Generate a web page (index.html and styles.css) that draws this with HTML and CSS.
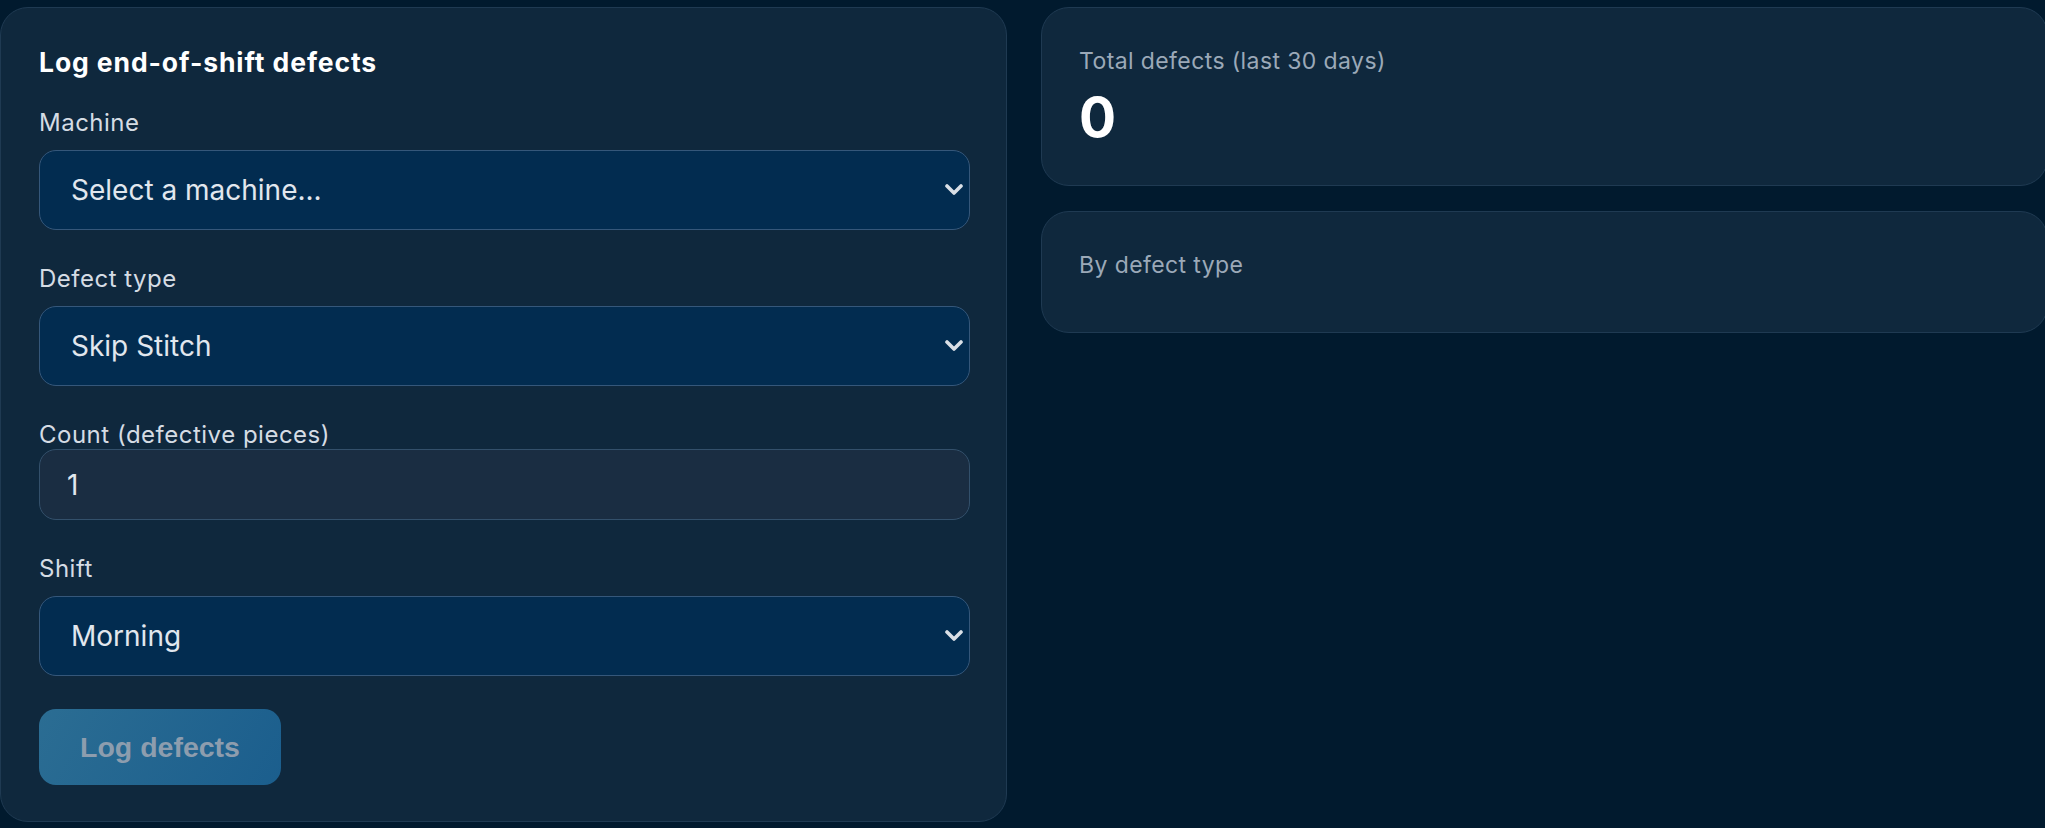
FILE: index.html
```html
<!DOCTYPE html>
<html lang="en">
<head>
<meta charset="utf-8">
<title>Defects</title>
<link rel="stylesheet" href="styles.css">
</head>
<body>
<main class="layout">
  <section class="panel form-panel">
    <h2 class="panel-title">Log end-of-shift defects</h2>
    <div class="fields">
      <div class="field">
        <label class="field-label" for="machine">Machine</label>
        <div class="select-wrap">
          <select id="machine" class="select">
            <option>Select a machine...</option>
          </select>
          <svg class="chevron" viewBox="0 0 18 11" width="18" height="11" aria-hidden="true"><path d="M2 2l7 7 7-7" fill="none" stroke="currentColor" stroke-width="3.6" stroke-linecap="round" stroke-linejoin="round"/></svg>
        </div>
      </div>
      <div class="field">
        <label class="field-label" for="dtype">Defect type</label>
        <div class="select-wrap">
          <select id="dtype" class="select">
            <option>Skip Stitch</option>
          </select>
          <svg class="chevron" viewBox="0 0 18 11" width="18" height="11" aria-hidden="true"><path d="M2 2l7 7 7-7" fill="none" stroke="currentColor" stroke-width="3.6" stroke-linecap="round" stroke-linejoin="round"/></svg>
        </div>
      </div>
      <div class="field">
        <label class="field-label tight" for="count">Count (defective pieces)</label>
        <input id="count" class="input" type="text" value="1">
      </div>
      <div class="field">
        <label class="field-label" for="shift">Shift</label>
        <div class="select-wrap">
          <select id="shift" class="select">
            <option>Morning</option>
          </select>
          <svg class="chevron" viewBox="0 0 18 11" width="18" height="11" aria-hidden="true"><path d="M2 2l7 7 7-7" fill="none" stroke="currentColor" stroke-width="3.6" stroke-linecap="round" stroke-linejoin="round"/></svg>
        </div>
      </div>
      <div class="actions">
        <button class="btn" type="button" disabled>Log defects</button>
      </div>
    </div>
  </section>
  <aside class="side">
    <section class="panel stat-panel">
      <div class="stat-label">Total defects (last 30 days)</div>
      <div class="stat-value">0</div>
    </section>
    <section class="panel stat-panel breakdown">
      <div class="stat-label">By defect type</div>
      <div class="breakdown-list"></div>
    </section>
  </aside>
</main>
</body>
</html>
```

FILE: styles.css
```css
html, body {
  margin: 0;
  padding: 0;
  overflow: hidden;
}
body {
  background: #011a2e;
  font-family: Inter, "Noto Sans", "DejaVu Sans", sans-serif;
  color: #dbe2ea;
  width: 2045px;
  height: 828px;
}
.layout {
  display: grid;
  grid-template-columns: 1007px 1007px;
  column-gap: 34px;
  align-items: start;
  padding-top: 7px;
}
.panel {
  box-sizing: border-box;
  background: #0f283d;
  border: 1px solid #1f3a52;
  border-radius: 28px;
}
.form-panel {
  padding: 39px 36px 36px 38px;
  height: 815px;
}
.panel-title {
  margin: 0;
  font-size: 26.5px;
  line-height: 31px;
  font-weight: 700;
  letter-spacing: 0.9px;
  color: #ffffff;
}
.fields {
  display: flex;
  flex-direction: column;
  gap: 34px;
  margin-top: 30px;
}
.field {
  display: flex;
  flex-direction: column;
}
.field-label {
  font-size: 24px;
  line-height: 29px;
  letter-spacing: 0.5px;
  color: #d5dce4;
  margin-bottom: 13px;
}
.field-label.tight {
  margin-bottom: 0;
}
.select-wrap {
  position: relative;
}
.select {
  -webkit-appearance: none;
  appearance: none;
  display: block;
  box-sizing: border-box;
  width: 100%;
  height: 80px;
  margin: 0;
  padding: 0 60px 0 31px;
  background: #022c50;
  border: 1.5px solid #35577a;
  border-radius: 17px;
  color: #e1e7ee;
  font-family: Inter, "Noto Sans", sans-serif;
  font-size: 28px;
}
.chevron {
  position: absolute;
  right: 7px;
  top: 50%;
  margin-top: -6px;
  color: #d9dfe6;
  pointer-events: none;
}
.input {
  display: block;
  box-sizing: border-box;
  width: 100%;
  height: 71px;
  margin: 0;
  padding: 0 27px;
  background: #1a2d42;
  border: 1.5px solid #33506b;
  border-radius: 17px;
  color: #e1e7ee;
  font-family: Inter, "Noto Sans", sans-serif;
  font-size: 28px;
  outline: none;
}
.actions {
  margin-top: -1px;
}
.btn {
  height: 76px;
  padding: 0 41px;
  border: 0;
  border-radius: 17px;
  background: linear-gradient(120deg, #2b6d93 0%, #1b5e8d 100%);
  color: #8d9dae;
  font-family: "Liberation Sans", Arial, sans-serif;
  font-weight: 700;
  font-size: 28.5px;
}
.side {
  display: flex;
  flex-direction: column;
  gap: 25px;
}
.stat-panel {
  padding: 39px 37px 35px 37px;
}
.stat-label {
  font-size: 23px;
  line-height: 28px;
  letter-spacing: 0.4px;
  color: #9ba9b8;
}
.stat-value {
  margin-top: 9px;
  font-size: 55px;
  line-height: 66px;
  font-weight: 700;
  color: #ffffff;
}
.breakdown-list {
  min-height: 18px;
}
```
